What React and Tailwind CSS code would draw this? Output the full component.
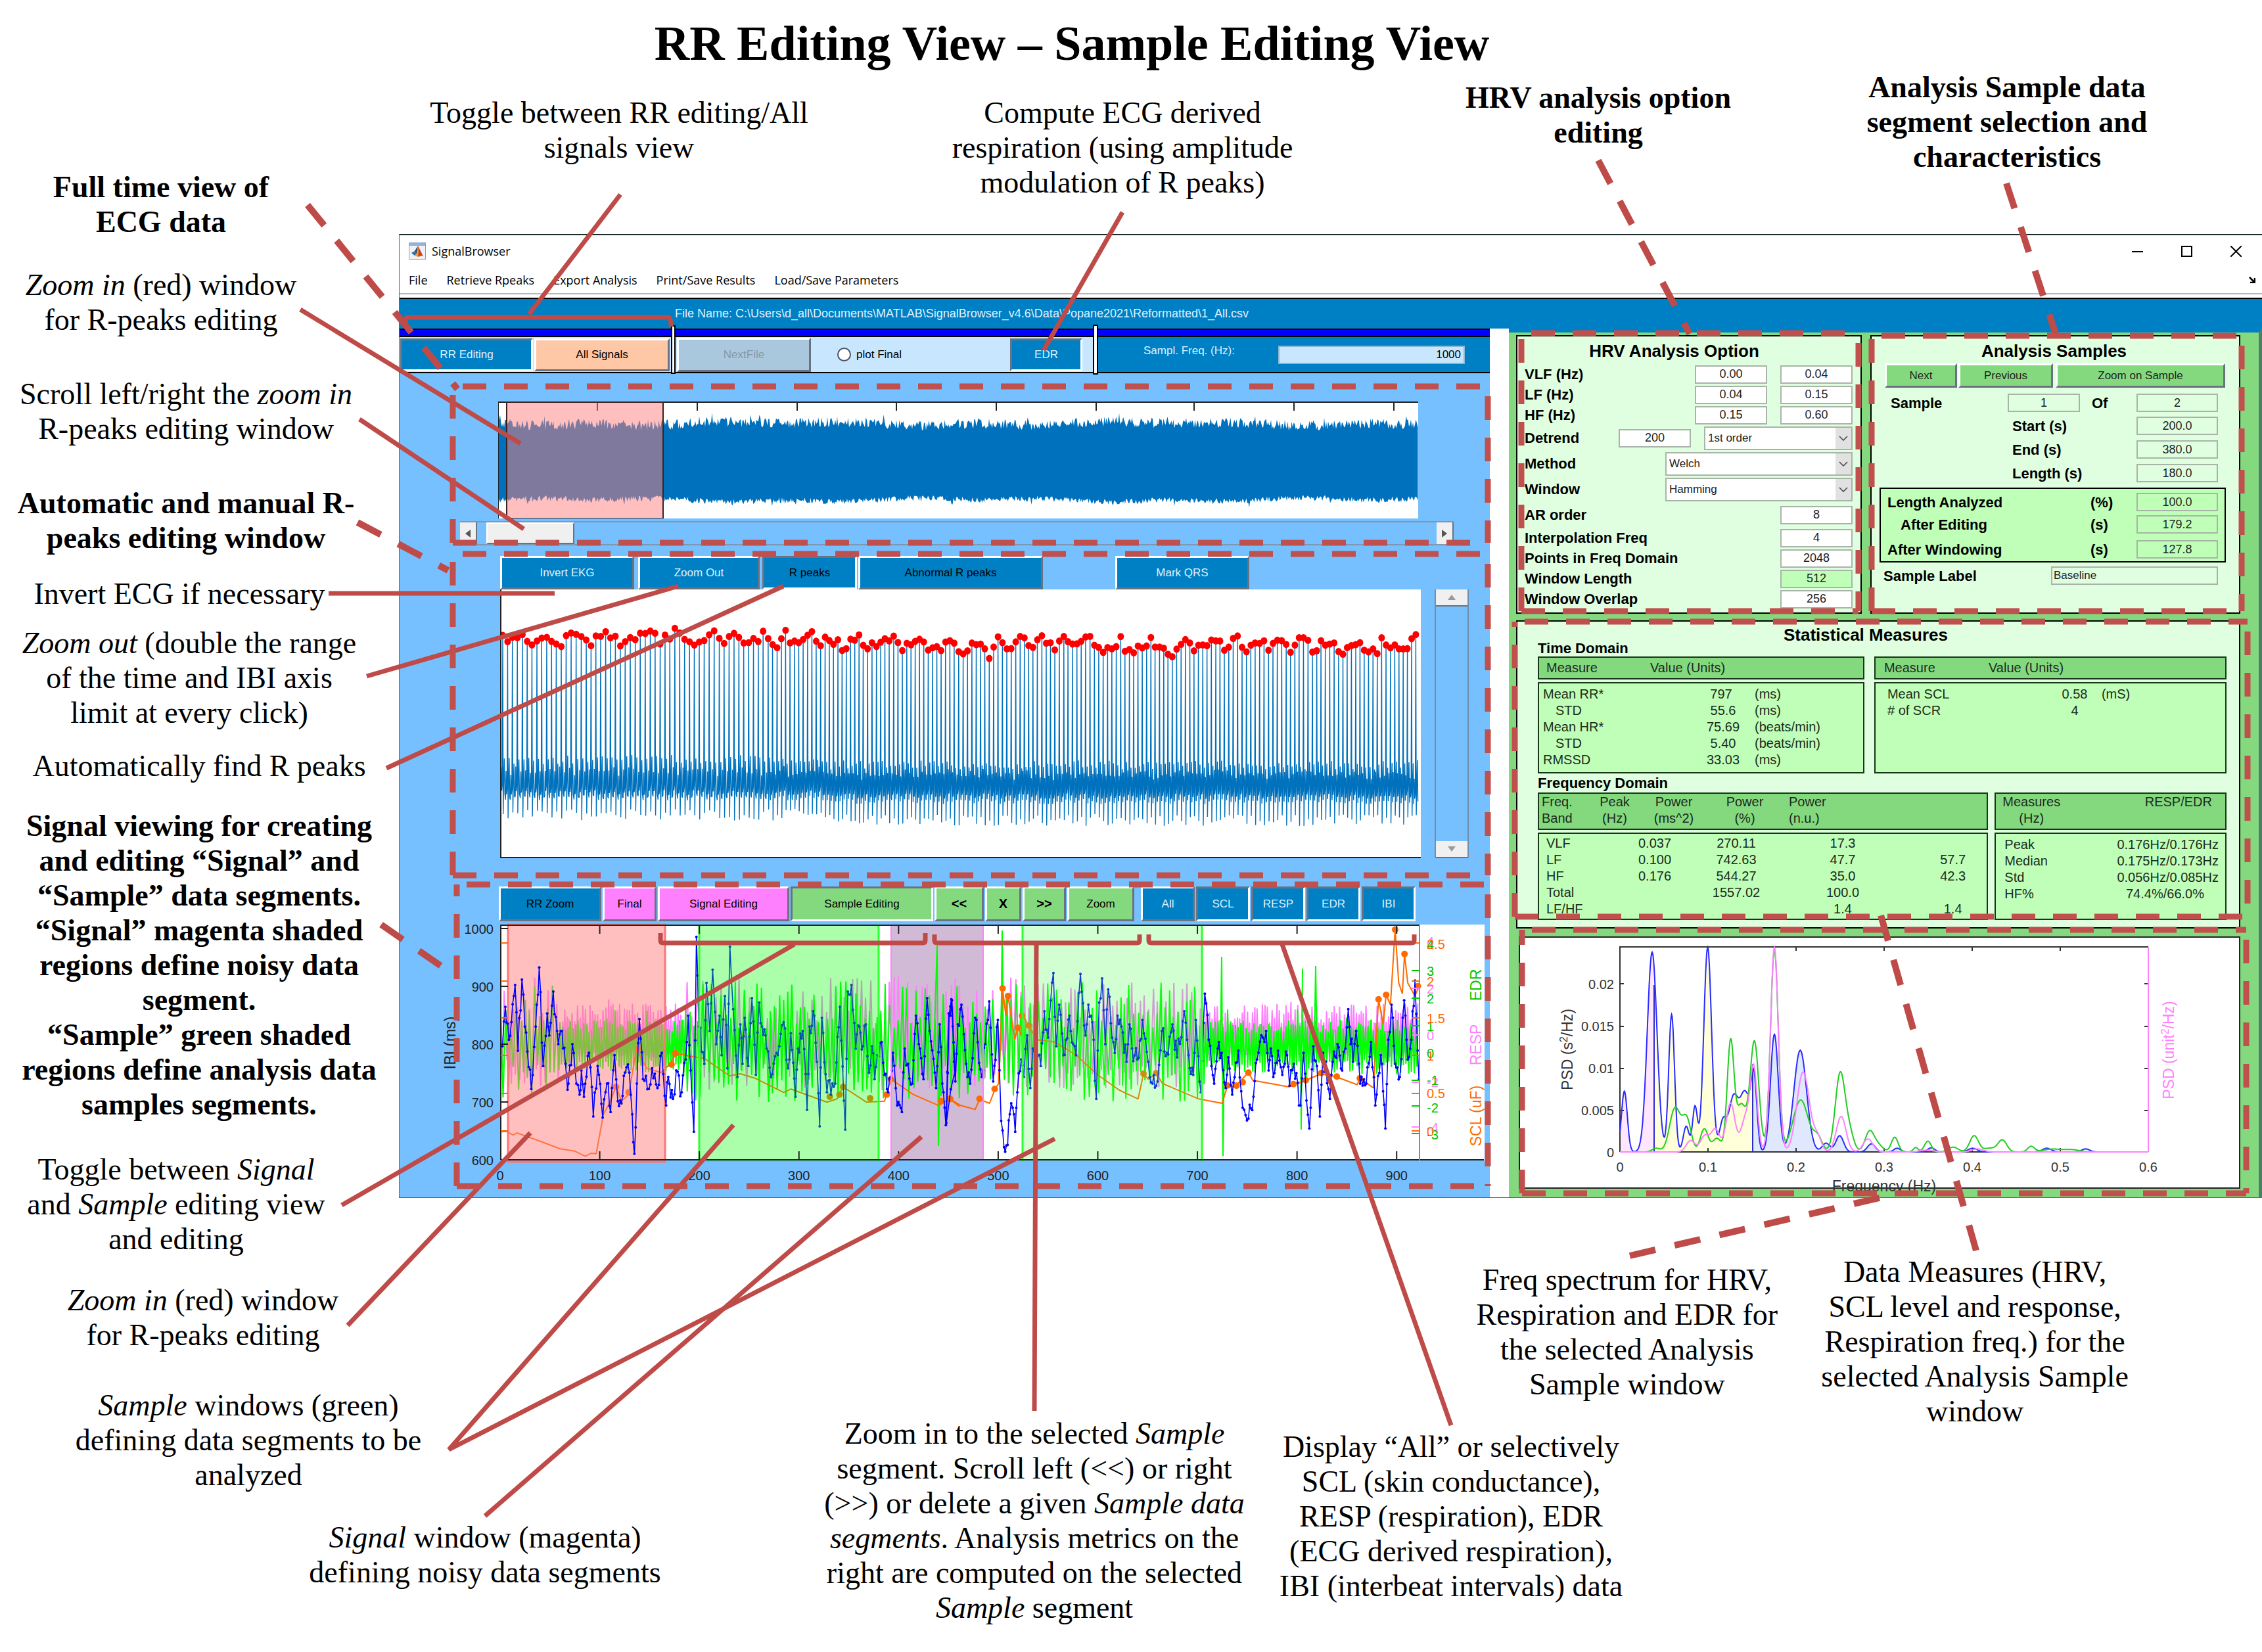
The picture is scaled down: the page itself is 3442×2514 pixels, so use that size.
import React from "react";

/* ---------- helpers ---------- */

function makeRandom(seed) {
  let s = seed;
  return () => {
    s = (s * 1664525 + 1013904223) % 4294967296;
    return s / 4294967296;
  };
}

const parse = (text) =>
  text
    .trim()
    .split(/\s+/)
    .map((p) => p.split(",").map(Number));

const toPoints = (list) => list.map(([x, y]) => `${x.toFixed(1)},${y.toFixed(1)}`).join(" ");

/* ---------- ECG overview ---------- */

function ecgOverview() {
  const rnd = makeRandom(7);
  const top = [];
  const bottom = [];
  for (let x = 0; x <= 1400; x += 1.5) {
    const drift = Math.sin(x / 90) * 2 + Math.sin(x / 31) * 1.5;
    top.push([x, 35 + drift + (rnd() - 0.6) * 16 - (rnd() > 0.97 ? 6 : 0)]);
    bottom.push([x, 149 - drift + (rnd() - 0.4) * 9 + (rnd() > 0.97 ? 6 : 0)]);
  }
  return toPoints([...top, ...bottom.reverse()]);
}

/* ---------- ECG beats ---------- */

function ecgBeats() {
  const rnd = makeRandom(21);
  const line = [];
  const peaks = [];
  let x = 4;
  let i = 0;
  while (x < 1398) {
    const drop = x > 500 ? 8 : 0;
    const slow = Math.sin(i * 1.05 + Math.sin(i / 9) * 2) * 7 + Math.sin(i / 7) * 3;
    const py = 74 + drop * 1.2 + slow + (rnd() - 0.5) * 16 + (x > 700 && rnd() > 0.96 ? 12 : 0);
    const base = 301 + drop * 0.7 + (rnd() - 0.5) * 8;
    line.push([x - 3.2, base + 16], [x - 2.4, base - 30 + rnd() * 10], [x - 1.6, base + 8], [x - 0.8, base], [x, py]);
    line.push([x + 0.7, 334 + drop + rnd() * 18], [x + 1.4, base - 4], [x + 2.4, 252 + drop + rnd() * 14]);
    line.push([x + 3.2, base + 12]);
    peaks.push([x, py]);
    x += (x < 400 ? 7.5 : 6.6) + (rnd() - 0.5) * 0.6;
    i += 1;
  }
  return { line: toPoints(line), peaks };
}

/* ---------- IBI / SCL / RESP / EDR traces ---------- */

const left = ([x, y]) => [600 + x / 1.823, 1330 + y / 3];
const right = ([x, y]) => [1440 + x / 1.823, 1330 + y / 3];

const IBI = [
  ...parse(`300,790 308,610 318,760 335,510 343,810 354,485 362,700 380,985 392,700 402,430 413,880 424,640 430,740 441,540 455,780 465,720 478,930 483,960 494,780 505,960 514,1010 519,900 526,1020 540,820 552,1110 564,880 578,1115 590,960 600,1090 611,830 620,1040 630,1050 640,910 652,910 660,1100 666,1280 673,960 680,665 690,940 706,985 715,890 730,980 742,820 754,1060 760,930 773,1030 782,900 797,1000 808,850 815,650 822,900 831,1180 838,290 845,700 860,870 866,500 875,720 883,440 893,780 902,650 908,830 917,560 924,890 931,335 940,620 952,930 960,690 966,870 972,660 982,880 992,570 1003,920 1012,590 1020,700 1033,800 1045,930 1060,820 1068,790 1080,680 1092,890 1100,730 1113,1020 1120,800 1133,720 1145,1080 1152,700 1165,650 1180,1155 1186,660 1200,1000 1215,960 1223,960 1236,610 1251,1170 1258,540 1268,510 1280,800 1290,700 1300,790 1308,690 1317,910 1325,790 1332,940 1340,830 1352,770 1360,920 1370,1000 1383,820 1395,1060 1408,1090 1416,800 1425,870 1437,960 1447,650 1455,780 1468,940 1478,570 1485,720 1503,980 1513,690 1520,960 1530,1150 1538,640 1547,580 1556,900`).map(left),
  ...parse(`0,1140 8,640 14,575 25,950 32,690 42,600 55,870 66,960 80,660 98,930 108,780 119,585 130,950 143,670 152,1130 160,1250 170,1240 176,1100 184,1070 191,1180 197,1000 208,850 215,930 224,740 233,980 240,800 262,880 272,630 282,750 297,455 305,790 313,600 325,830 342,650 352,780 360,830 372,460 386,740 394,600 405,680 416,1030 424,590 432,480 441,780 449,530 460,750 467,820 475,650 486,700 500,860 508,690 515,800 530,850 544,670 560,860 572,960 582,970 598,720 612,820 627,690 640,840 660,630 672,830 685,920 692,670 706,1000 717,550 728,760 743,960 756,770 775,980 782,840 793,1010 810,810 822,1070 838,1120 852,1020 862,850 878,750 887,720 894,900 900,800 907,930 920,810 932,920 945,830 952,970 964,870 982,1060 991,820 1007,1165 1018,790 1028,880 1036,1110 1045,820 1064,1030 1072,860 1085,780 1098,900 1107,800 1115,620 1128,860 1137,720 1148,960 1165,960 1178,770 1190,1060 1205,830 1218,1165 1226,760 1235,600 1245,870 1258,930 1270,580 1280,850 1290,760 1300,490 1311,940`).map(right),
];

const SCL = [
  ...parse(`297,1180 310,1178 330,1195 340,1185 400,1220 460,1258 500,1268 530,1292 545,1278 560,1280 580,1100 600,1040 615,970 630,1040 650,1010 672,800 700,890 740,910 765,870 782,822 820,835 860,845 930,925 960,915 1000,935 1080,1000 1100,985 1200,1045 1228,1030 1245,975 1310,1045 1360,1040 1378,940 1440,1010 1510,1060 1540,1030 1568,1065`).map(left),
  ...parse(`10,1030 40,1060 80,1078 92,1032 120,1050 135,985 145,960 156,525 165,650 171,560 190,760 198,700 208,740 212,650 230,700 250,760 300,770 360,830 420,920 480,990 532,1030 547,915 560,940 582,915 600,960 700,1030 765,1050 780,970 800,975 838,910 850,945 950,975 997,945 1040,915 1083,930 1140,965 1147,935 1185,980 1199,575 1212,690 1220,555 1232,600 1245,255 1255,500 1265,550 1271,368 1280,500 1300,560 1310,520`).map(right),
];

const SCL_PEAKS = [
  ...parse(`615,975 650,1000 676,800 769,873 780,822 1208,1020 1235,1010 1245,975 1320,1027 1366,1010 1377,940 1517,1040 1542,1030`).map(left),
  ...parse(`10,1030 92,1030 134,985 156,525 171,560 198,705 210,650 229,695 547,915 582,913 780,968 805,970 822,953 838,910 963,962 997,945 1040,912 1083,928 1147,936 1199,575 1220,555 1245,257 1271,368 1308,515`).map(right),
];

function jitterTrace(keys, seed) {
  const rnd = makeRandom(seed);
  const out = [];
  for (let i = 0; i < keys.length - 1; i += 1) {
    const [x0, y0] = keys[i];
    const [x1, y1] = keys[i + 1];
    out.push([x0, y0]);
    const steps = Math.max(2, Math.round((x1 - x0) / 2));
    for (let k = 1; k < steps; k += 1) {
      const f = k / steps;
      out.push([x0 + (x1 - x0) * f, y0 + (y1 - y0) * f + (rnd() - 0.5) * 30]);
    }
  }
  out.push(keys[keys.length - 1]);
  return out;
}

function oscillation(seed, upDense, downDense, upWide, downWide) {
  const rnd = makeRandom(seed);
  const out = [];
  let x = 762;
  let up = true;
  while (x < 2158) {
    const dense = (x > 850 && x < 1040) || x > 1830;
    const amp = dense ? 0.55 + rnd() * 0.55 + (rnd() > 0.96 ? 0.5 : 0) : 0.3 + rnd() * 0.85;
    const mid = 1592;
    if (up) out.push([x, mid - (dense ? upDense : upWide) * amp]);
    else out.push([x, mid + (dense ? downDense : downWide) * amp]);
    up = !up;
    x += dense ? 1.4 + rnd() * 1 : 2.2 + rnd() * 2.4;
  }
  return toPoints(out);
}

const EDR_SPIKES = parse(`1421,1600 1426,1440 1428,1745 1431,1600 1523,1600 1525,1417 1527,1600 1857,1600 1859,1457 1861,1760 1863,1600 1979,1590 1980,1720 1982,1475 2000,1590 2002,1471 2004,1600`);

const SIGNAL_TICKS = [0, 100, 200, 300, 400, 500, 600, 700, 800, 900];
const tx = (t) => 761 + t * 1.5158;
const vy = (v) => 1766 - (v - 600) * 0.88;

function SignalsPlot() {
  const ibi = jitterTrace(IBI, 5);
  return (
    <svg viewBox="608 1403 1659 420" className="block w-full" role="img" aria-label="IBI, EDR, RESP and SCL signals over time" fontFamily="Liberation Sans, Arial, sans-serif" fontSize="20">
      <rect x="762" y="1408" width="1497" height="359" fill="#fff" />
      <rect x="1356" y="1409" width="140" height="357" fill="#d1bad5" />
      <g fill="none" strokeLinejoin="bevel">
        <polyline points={oscillation(11, 58, 18, 92, 60)} stroke="#ff80ff" strokeWidth="2" />
        <polyline points={oscillation(3, 36, 40, 86, 76)} stroke="#00ff00" strokeWidth="2" />
        {[0, 4, 7, 11, 14].map((start, i, all) => (
          <polyline key={start} points={toPoints(EDR_SPIKES.slice(start, all[i + 1]))} stroke="#00ff00" strokeWidth="2" />
        ))}
        <polyline points={toPoints(SCL)} stroke="#ff6a00" strokeWidth="2" />
      </g>
      {SCL_PEAKS.map(([x, y]) => (
        <circle key={x} cx={x} cy={y} r="5" fill="#ff6a00" />
      ))}
      <rect x="773" y="1408" width="239" height="361" fill="#ff8080" fillOpacity=".5" stroke="#ff7474" strokeWidth="3" />
      <polyline points={toPoints(ibi)} fill="none" stroke="#0000ff" strokeWidth="1.6" />
      {ibi.map(([x, y], i) => (
        <circle key={i} cx={x} cy={y} r="2" fill="#0000ff" />
      ))}
      <rect x="1063" y="1408" width="274" height="361" fill="#00ff00" fillOpacity=".33" />
      <rect x="1556" y="1408" width="274" height="361" fill="#40ff40" fillOpacity=".24" />
      <g stroke="#2eff2e" strokeWidth="3">
        <path d="M1064 1408V1769M1337 1408V1769M1556 1408V1769M1829 1408V1769" />
      </g>
      <path d="M1356 1409V1766M1496 1409V1766" stroke="#ff80ff" strokeWidth="2" />
      <path d="M762 1766V1409H2160M762 1766H2258" fill="none" stroke="#222" strokeWidth="2" />
      <g stroke="#222" strokeWidth="2">
        {SIGNAL_TICKS.slice(1).map((t) => (
          <path key={t} d={`M${tx(t)} 1766v-13M${tx(t)} 1409v13`} />
        ))}
        {[600, 700, 800, 900, 1000].map((v) => (
          <path key={v} d={`M762 ${vy(v)}h11`} />
        ))}
      </g>
      <path d="M762 1436h11M762 1494h11M762 1550h11M762 1607h11M762 1665h11M762 1722h11" stroke="#ff6a00" strokeWidth="2" />
      <path d="M2160 1408V1767M2148 1436h12M2148 1494h12M2148 1550h12M2148 1607h12M2148 1665h12M2148 1722h12" stroke="#ff6a00" strokeWidth="2" />
      <path d="M2148 1478h12M2148 1520h12M2148 1562h12M2148 1645h12M2148 1684h12M2148 1726h12" stroke="#00c800" strokeWidth="2" />
      <path d="M2148 1505h12M2148 1576h12M2148 1648h12M2148 1716h12" stroke="#ff80ff" strokeWidth="2" />
      <g fill="#222" textAnchor="end">
        {[600, 700, 800, 900, 1000].map((v) => (
          <text key={v} x="751" y={vy(v) + 8}>{v}</text>
        ))}
      </g>
      <g fill="#222" textAnchor="middle">
        {SIGNAL_TICKS.map((t) => (
          <text key={t} x={tx(t)} y="1797">{t}</text>
        ))}
      </g>
      <g fill="#ff80ff">
        <text x="2171" y="1441">4</text>
        <text x="2171" y="1513">2</text>
        <text x="2171" y="1584">0</text>
        <text x="2171" y="1655">-2</text>
        <text x="2171" y="1724">-4</text>
      </g>
      <g fill="#00c000">
        <text x="2171" y="1445">4</text>
        <text x="2171" y="1486">3</text>
        <text x="2171" y="1528">2</text>
        <text x="2171" y="1570">1</text>
        <text x="2171" y="1611">0</text>
        <text x="2171" y="1652">-1</text>
        <text x="2171" y="1694">-2</text>
        <text x="2171" y="1735">-3</text>
      </g>
      <g fill="#ff6a00">
        <text x="2171" y="1445">2.5</text>
        <text x="2171" y="1502">2</text>
        <text x="2171" y="1558">1.5</text>
        <text x="2171" y="1615">1</text>
        <text x="2171" y="1672">0.5</text>
        <text x="2171" y="1730">0</text>
      </g>
      <g fontSize="23" textAnchor="middle">
        <text transform="translate(693 1588) rotate(-90)" fill="#222">IBI (ms)</text>
        <text transform="translate(2254 1500) rotate(-90)" fill="#00c800">EDR</text>
        <text transform="translate(2254 1591) rotate(-90)" fill="#ff80ff">RESP</text>
        <text transform="translate(2254 1699) rotate(-90)" fill="#ff6a00">SCL (uF)</text>
      </g>
    </svg>
  );
}

/* ---------- power spectrum ---------- */

const PSD_BLUE = parse(`260,785,6 317,150,10 357,435,6 387,945,6 405,857,5 431,128,8 462,930,7 484,815,10 508,800,10 526,740,6 568,525,8 621,598,13 674,1022,8 702,988,8 767,1025,8 820,1045,7 890,1043,7 975,1045,9 1127,1045,9 1207,1048,8`);
const PSD_GREEN = parse(`325,1045,8 364,862,11 388,915,9 424,957,8 450,1000,9 478,565,7 500,850,10 527,560,9 568,140,8 622,825,16 657,1000,9 703,705,10 722,980,9 763,972,9 780,1030,10 815,995,7 858,1042,5 883,1013,7 935,1040,10 978,988,9 1010,1045,12 1036,1008,9 1095,1037,7 1140,1049,20 1180,1053,14`);
const PSD_PINK = parse(`396,1010,9 425,990,9 447,960,9 478,840,9 510,900,10 526,710,7 568,128,8 627,697,13 657,1000,8 705,900,10 760,1003,10 880,1054,14 985,1048,12`);

function spectrum(peaks, from, to) {
  const out = [];
  for (let x = from; x <= to; x += 1) {
    let h = 0;
    for (const [c, y, s] of peaks) h += (1062 - y) * Math.exp(-((x - c) ** 2) / (2 * s * s));
    out.push([2280 + x / 1.349, 1400 + (1062 - Math.min(h, 935)) / 3]);
  }
  return out;
}

function area(from, to) {
  const p = spectrum(PSD_BLUE, from, to);
  return toPoints([[p[0][0], 1754], ...p, [p[p.length - 1][0], 1754]]);
}

function SpectrumPlot() {
  const xs = [0, 1, 2, 3, 4, 5, 6];
  return (
    <svg viewBox="2314 1428 1094 380" className="block w-full overflow-visible" role="img" aria-label="Power spectral density" fontFamily="Liberation Sans, Arial, sans-serif" fontSize="20">
      <polygon points={area(251, 320)} fill="#ffe6ff" />
      <polygon points={area(320, 523)} fill="#ffffd9" />
      <polygon points={area(523, 900)} fill="#dfe8fd" />
      <path d="M2466 1754V1442H3270M2466 1754H3270" fill="none" stroke="#333" strokeWidth="2" />
      <g stroke="#333" strokeWidth="2">
        {xs.slice(1, 6).map((i) => (
          <path key={i} d={`M${2466 + i * 134} 1754v-6M${2466 + i * 134} 1442v6`} />
        ))}
        <path d="M2466 1498h6M2466 1563h6M2466 1627h6M2466 1691h6M3270 1498h-6M3270 1563h-6M3270 1627h-6M3270 1691h-6" />
      </g>
      <g fill="none" strokeWidth="2">
        <polyline points={toPoints(spectrum(PSD_BLUE, 251, 1335))} stroke="#2a2aff" />
        <path d="M2518 1754V1500M2668 1754V1620" stroke="#2a2ad0" />
        <polyline points={toPoints(spectrum(PSD_GREEN, 251, 1335))} stroke="#22cc22" />
        <polyline points={toPoints(spectrum(PSD_PINK, 251, 1335))} stroke="#ff80ff" />
        <path d="M3270 1442V1754" stroke="#ff80ff" />
      </g>
      <g fill="#333" textAnchor="end">
        <text x="2457" y="1506">0.02</text>
        <text x="2457" y="1570">0.015</text>
        <text x="2457" y="1634">0.01</text>
        <text x="2457" y="1698">0.005</text>
        <text x="2457" y="1762">0</text>
      </g>
      <g fill="#333" textAnchor="middle">
        {xs.map((i) => (
          <text key={i} x={2466 + i * 134} y="1784">{i === 0 ? "0" : `0.${i}`}</text>
        ))}
        <text x="2868" y="1814" fontSize="23">Frequency (Hz)</text>
        <text transform="translate(2394 1598) rotate(-90)" fontSize="23">
          PSD (s<tspan dy="-8" fontSize="16">2</tspan><tspan dy="8">/Hz)</tspan>
        </text>
        <text transform="translate(3309 1599) rotate(-90)" fontSize="23" fill="#ff80ff">
          PSD (unit<tspan dy="-8" fontSize="16">2</tspan><tspan dy="8">/Hz)</tspan>
        </text>
      </g>
    </svg>
  );
}

/* ---------- window controls ---------- */

const RAISED = "border-t-white border-l-white border-b-gray-500 border-r-gray-500";
const SUNK = "border-t-gray-500 border-l-gray-500 border-b-white border-r-white";

function Btn({ children, sunk, className }) {
  return (
    <button type="button" className={`shrink-0 border-[3px] text-center text-[17px] leading-5 ${sunk ? SUNK : RAISED} ${className}`}>
      {children}
    </button>
  );
}

function MatlabIcon() {
  return (
    <svg viewBox="0 0 26 26" className="h-[26px] w-[26px]" aria-hidden="true">
      <rect x=".5" y=".5" width="25" height="25" fill="#eef1f5" stroke="#8aa0b8" />
      <rect x="1" y="1" width="24" height="4" fill="#8fb4d8" />
      <path d="M4 16l5-3 3 4-3 3z" fill="#2a6fb0" />
      <path d="M9 13l5-8-2 12z" fill="#174a86" />
      <path d="M14 5l4 8 4 8-3-1-4 2-3-5z" fill="#c8401e" />
      <path d="M14 5l1 9-1 8-5-2 3-3z" fill="#f29a2e" />
    </svg>
  );
}

function TitleBar() {
  return (
    <header className="h-[97px] border-t-2 border-[#1c2b2b] bg-white font-['Open_Sans','Noto_Sans',sans-serif] text-[18px] text-black">
      <div className="flex h-[48px] items-center gap-[9px] pl-3.5">
        <MatlabIcon />
        <span className="flex-1">SignalBrowser</span>
        <div className="flex items-center gap-[58px] pr-[31px]">
          <button type="button" aria-label="Minimize" className="h-[17px] w-[17px]">
            <svg viewBox="0 0 17 17"><path d="M0 9h17" stroke="#000" strokeWidth="2" /></svg>
          </button>
          <button type="button" aria-label="Maximize" className="h-[17px] w-[17px]">
            <svg viewBox="0 0 17 17"><rect x="1" y="1" width="15" height="15" fill="none" stroke="#000" strokeWidth="2" /></svg>
          </button>
          <button type="button" aria-label="Close" className="h-[17px] w-[17px]">
            <svg viewBox="0 0 17 17"><path d="M0 0l17 17M17 0L0 17" stroke="#000" strokeWidth="2" /></svg>
          </button>
        </div>
      </div>
      <nav className="flex h-[42px] items-center gap-[29px] border-b-2 border-[#b8b8b8] pl-3.5 pr-2.5">
        <button type="button">File</button>
        <button type="button">Retrieve Rpeaks</button>
        <button type="button">Export Analysis</button>
        <button type="button">Print/Save Results</button>
        <button type="button">Load/Save Parameters</button>
        <svg viewBox="0 0 10 10" className="ml-auto h-2.5 w-2.5" aria-hidden="true"><path d="M1 1l7 7M9 2v7H2" fill="none" stroke="#000" strokeWidth="2.5" /></svg>
      </nav>
    </header>
  );
}

function Toolbar() {
  return (
    <div className="flex h-[68px] flex-col">
      <div className="h-[13px] border-y-2 border-black bg-[#0000ff]" />
      <div className="flex h-[55px] items-center border-b-2 border-black bg-[#c8e7ff]">
        <Btn sunk className="ml-px h-[50px] w-[202px] bg-[#0080c4] text-[#dff1ff]">RR Editing</Btn>
        <Btn className="ml-0.5 h-[50px] w-[206px] bg-[#fec7a6] text-black">All Signals</Btn>
        <div className="-mt-4 ml-0.5 h-[74px] w-[7px] shrink-0 border-2 border-black bg-white" />
        <Btn className="ml-0.5 h-[52px] w-[204px] bg-[#a9c8dd] text-[#8598a6]">NextFile</Btn>
        <label className="ml-10 flex items-center gap-2 text-[17px] text-black">
          <input type="radio" name="plot" className="h-[21px] w-[21px] appearance-none rounded-full border-2 border-gray-600 bg-white" />
          plot Final
        </label>
        <Btn sunk className="ml-auto h-[50px] w-[110px] bg-[#0080c4] text-[#dff1ff]">EDR</Btn>
        <div className="-mt-4 ml-4 h-[76px] w-[8px] shrink-0 border-2 border-black bg-white" />
        <label className="flex h-full w-[596px] shrink-0 items-center bg-[#0080c4] pl-[69px] text-[17px] text-[#dff1ff]">
          <span className="w-[205px] pb-3">Sampl. Freq. (Hz):</span>
          <input defaultValue="1000" className="h-7 w-[284px] border-2 border-[#8fb6d0] bg-[#c8e7ff] px-1 text-right text-[17px] text-black" />
        </label>
      </div>
    </div>
  );
}

function OverviewPanel() {
  return (
    <section className="pt-[43px]">
      <svg viewBox="0 0 1400 178" preserveAspectRatio="none" className="ml-[150px] block h-[178px] w-[calc(100%-259px)] bg-white" role="img" aria-label="Full ECG recording">
        <polygon points={ecgOverview()} fill="#0072bd" />
        <path d="M0 178V1H1400" fill="none" stroke="#222" strokeWidth="2" />
        {[151, 303, 455, 606, 758, 910, 1059, 1211, 1363].map((x) => (
          <path key={x} d={`M${x} 1v13`} stroke="#222" strokeWidth="2" />
        ))}
        <rect x="13" y="1" width="238" height="177" fill="#ff8080" fillOpacity=".5" stroke="#402020" strokeWidth="2" />
      </svg>
      <div className="ml-[92px] mr-[55px] mt-1 flex h-[37px] border-y-2 border-[#7c98b2]">
        <button type="button" aria-label="Scroll left" className="flex w-[26px] items-center justify-center border-r-2 border-gray-500 bg-[#f0f0f0]">
          <svg viewBox="0 0 8 12" className="h-3 w-2"><path d="M8 0v12L0 6z" fill="#555" /></svg>
        </button>
        <div className="ml-3.5 w-[134px] border-2 border-b-gray-500 border-l-white border-r-gray-500 border-t-white bg-[#f0f0f0]" />
        <button type="button" aria-label="Scroll right" className="ml-auto flex w-[26px] items-center justify-center border-r-2 border-gray-500 bg-[#f0f0f0]">
          <svg viewBox="0 0 8 12" className="h-3 w-2"><path d="M0 0v12l8-6z" fill="#555" /></svg>
        </button>
      </div>
    </section>
  );
}

function EditingPanel() {
  const { line, peaks } = ecgBeats();
  return (
    <section className="pl-[153px] pr-8 pt-4">
      <div className="flex h-[51px]">
        <Btn className="w-[204px] bg-[#0080c4] text-[#dff1ff]">Invert EKG</Btn>
        <Btn className="ml-1.5 w-[185px] bg-[#0080c4] text-[#dff1ff]">Zoom Out</Btn>
        <Btn sunk className="ml-1 w-[144px] bg-[#0080c4] text-black">R peaks</Btn>
        <Btn className="ml-0.5 w-[281px] bg-[#0080c4] text-black">Abnormal R peaks</Btn>
        <Btn className="ml-[110px] w-[204px] bg-[#0080c4] text-[#dff1ff]">Mark QRS</Btn>
      </div>
      <div className="flex gap-[21px]">
        <svg viewBox="0 0 1400 409" preserveAspectRatio="none" className="block h-[409px] min-w-0 flex-1 bg-white" role="img" aria-label="ECG with detected R peaks">
          <polyline points={line} fill="none" stroke="#0072bd" strokeWidth="1.4" strokeLinejoin="bevel" />
          {peaks.map(([x, y]) => (
            <ellipse key={x} cx={x} cy={y} rx="5" ry="5.5" fill="#ff0000" />
          ))}
          <path d="M1 0V408H1400" fill="none" stroke="#222" strokeWidth="2" />
        </svg>
        <div className="flex w-[52px] flex-col justify-between border-x-2 border-[#6f8eaa]">
          <button type="button" aria-label="Scale up" className="flex h-[26px] items-center justify-center border-b-2 border-gray-500 bg-[#f0f0f0]">
            <svg viewBox="0 0 12 8" className="h-2 w-3"><path d="M0 8h12L6 0z" fill="#999" /></svg>
          </button>
          <button type="button" aria-label="Scale down" className="flex h-[26px] items-center justify-center border-b-2 border-gray-500 bg-[#f0f0f0]">
            <svg viewBox="0 0 12 8" className="h-2 w-3"><path d="M0 0h12L6 8z" fill="#999" /></svg>
          </button>
        </div>
      </div>
    </section>
  );
}

function SignalsPanel() {
  return (
    <section className="pt-[43px]">
      <div className="flex h-[53px] gap-0.5 pl-[151px]">
        <Btn className="w-[156px] bg-[#0080c4] text-black">RR Zoom</Btn>
        <Btn className="w-[82px] bg-[#ff80ff] text-black">Final</Btn>
        <Btn className="w-[200px] bg-[#ff80ff] text-black">Signal Editing</Btn>
        <Btn sunk className="w-[217px] bg-[#84d97f] text-black">Sample Editing</Btn>
        <Btn className="w-[75px] bg-[#84d97f] text-black"><b className="text-[20px]">&lt;&lt;</b></Btn>
        <Btn className="w-[55px] bg-[#84d97f] text-black"><b className="text-[20px]">X</b></Btn>
        <Btn className="w-[66px] bg-[#84d97f] text-black"><b className="text-[20px]">&gt;&gt;</b></Btn>
        <Btn className="w-[102px] bg-[#84d97f] text-black">Zoom</Btn>
        <Btn className="ml-2 w-[82px] bg-[#0080c4] text-[#dff1ff]">All</Btn>
        <Btn sunk className="w-[82px] bg-[#0080c4] text-[#dff1ff]">SCL</Btn>
        <Btn sunk className="w-[82px] bg-[#0080c4] text-[#dff1ff]">RESP</Btn>
        <Btn sunk className="w-[82px] bg-[#0080c4] text-[#dff1ff]">EDR</Btn>
        <Btn sunk className="w-[82px] bg-[#0080c4] text-[#dff1ff]">IBI</Btn>
      </div>
      <SignalsPlot />
    </section>
  );
}

/* ---------- analysis side ---------- */

function Field({ id, value, className = "w-[110px] bg-white" }) {
  return <input id={id} aria-label={id} defaultValue={value} className={`h-7 shrink-0 border-2 border-[#a9b4a9] text-center text-[18px] text-[#222] ${className}`} />;
}

function Picker({ id, value, className }) {
  return (
    <div className={`relative h-9 shrink-0 ${className}`}>
      <select id={id} aria-label={id} className="h-full w-full appearance-none border-2 border-[#a9b4a9] bg-white pl-1 text-[17px] text-[#222]">
        <option>{value}</option>
      </select>
      <div className="pointer-events-none absolute inset-y-0.5 right-0.5 flex w-6 items-center justify-center bg-[#e1e1e1]">
        <svg viewBox="0 0 14 8" className="h-2 w-3.5"><path d="M1 1l6 6 6-6" fill="none" stroke="#444" strokeWidth="1.5" /></svg>
      </div>
    </div>
  );
}

function OptionRow({ id, label, tall, children }) {
  return (
    <div className={`flex items-center gap-5 ${tall ? "h-[39px]" : "h-[31px]"}`}>
      <label htmlFor={id} className="flex-1 whitespace-nowrap text-[22px] font-bold">{label}</label>
      {children}
    </div>
  );
}

function OptionPanel() {
  return (
    <section className="h-[424px] border-2 border-black bg-[#e0ffe0] pl-[11px] pr-3 pt-1">
      <h2 className="h-[38px] pr-11 text-center text-[26px] font-bold leading-9">HRV Analysis Option</h2>
      <OptionRow id="vlf" label="VLF (Hz)"><Field id="vlf" value="0.00" /><Field id="vlf-max" value="0.04" /></OptionRow>
      <OptionRow id="lf" label="LF (Hz)"><Field id="lf" value="0.04" /><Field id="lf-max" value="0.15" /></OptionRow>
      <OptionRow id="hf" label="HF (Hz)"><Field id="hf" value="0.15" /><Field id="hf-max" value="0.60" /></OptionRow>
      <OptionRow id="detrend" label="Detrend" tall><Field id="detrend" value="200" /><Picker id="order" value="1st order" className="w-[226px]" /></OptionRow>
      <OptionRow id="method" label="Method" tall><Picker id="method" value="Welch" className="w-[285px]" /></OptionRow>
      <OptionRow id="window" label="Window" tall><Picker id="window" value="Hamming" className="w-[285px]" /></OptionRow>
      <OptionRow id="ar" label="AR order" tall><Field id="ar" value="8" /></OptionRow>
      <OptionRow id="interp" label="Interpolation Freq"><Field id="interp" value="4" /></OptionRow>
      <OptionRow id="points" label="Points in Freq Domain"><Field id="points" value="2048" /></OptionRow>
      <OptionRow id="wlen" label="Window Length"><Field id="wlen" value="512" className="w-[110px] bg-[#c0ffb8]" /></OptionRow>
      <OptionRow id="wover" label="Window Overlap"><Field id="wover" value="256" /></OptionRow>
    </section>
  );
}

function SamplesPanel() {
  const mint = "w-[124px] bg-[#e0ffe0]";
  const green = "w-[124px] bg-[#c0ffb8]";
  return (
    <section className="h-[424px] border-2 border-black bg-[#e0ffe0] pt-1 text-[22px] font-bold">
      <h2 className="h-[37px] pr-1 text-center text-[26px] leading-9">Analysis Samples</h2>
      <div className="flex h-[37px] gap-0.5 pl-5 font-normal">
        <Btn className="w-[110px] bg-[#84d97f] text-[#222]">Next</Btn>
        <Btn className="w-[144px] bg-[#84d97f] text-[#222]">Previous</Btn>
        <Btn className="ml-0.5 w-[258px] bg-[#84d97f] text-[#222]">Zoom on Sample</Btn>
      </div>
      <div className="mr-8 mt-1.5 flex h-[34px] items-center pl-[29px]">
        <label htmlFor="sample" className="flex-1">Sample</label>
        <Field id="sample" value="1" className="w-[110px] bg-[#e0ffe0] font-normal" />
        <label htmlFor="of" className="w-[86px] pl-[18px]">Of</label>
        <Field id="of" value="2" className={`${mint} font-normal`} />
      </div>
      {[["start", "Start (s)", "200.0"], ["end", "End (s)", "380.0"], ["length", "Length (s)", "180.0"]].map(([id, label, value]) => (
        <div key={id} className="mr-8 flex h-9 items-center justify-end">
          <label htmlFor={id} className="w-[189px]">{label}</label>
          <Field id={id} value={value} className={`${mint} font-normal`} />
        </div>
      ))}
      <div className="ml-3 mr-5 mt-1 h-[114px] border-2 border-black bg-[#c0ffb8] px-2.5 pt-1">
        <div className="flex h-8 items-center">
          <label htmlFor="pct" className="flex-1">Length Analyzed</label>
          <span className="w-[70px]">(%)</span>
          <Field id="pct" value="100.0" className={`${green} font-normal`} />
        </div>
        <div className="flex h-9 items-center">
          <label htmlFor="edited" className="flex-1 pl-5">After Editing</label>
          <span className="w-[70px]">(s)</span>
          <Field id="edited" value="179.2" className={`${green} font-normal`} />
        </div>
        <div className="flex h-10 items-center">
          <label htmlFor="windowed" className="flex-1">After Windowing</label>
          <span className="w-[70px]">(s)</span>
          <Field id="windowed" value="127.8" className={`${green} font-normal`} />
        </div>
      </div>
      <div className="mr-8 mt-1 flex h-8 items-center pl-[18px]">
        <label htmlFor="label" className="flex-1">Sample Label</label>
        <input id="label" defaultValue="Baseline" className="h-7 w-[254px] border-2 border-[#a9b4a9] bg-[#e0ffe0] px-0.5 text-[17px] font-normal text-[#222]" />
      </div>
    </section>
  );
}

const HEAD = "border-2 border-[#173517] bg-[#84d97f]";
const BODY = "mt-1 border-2 border-[#173517] bg-[#c0ffb8]";

function StatsPanel() {
  return (
    <section className="mt-2.5 h-[469px] border-2 border-black bg-[#e0ffe0] pl-[31px] pr-[19px] pt-1 text-[20px] leading-[25px] text-[#1c2b1c]">
      <h2 className="h-[25px] pr-[50px] text-center text-[26px] font-bold leading-8 text-black">Statistical Measures</h2>
      <h3 className="h-6 text-[22px] font-bold leading-6 text-black">Time Domain</h3>
      <div className="grid grid-cols-[496fr_535fr] gap-[15px]">
        <div>
          <div className={`flex h-[35px] items-center pl-[11px] ${HEAD}`}><span className="w-[158px]">Measure</span><span>Value (Units)</span></div>
          <div className={`h-[139px] pt-1 ${BODY}`}>
            <table className="w-full table-fixed">
              <colgroup><col className="w-[232px]" /><col className="w-[96px]" /><col /></colgroup>
              <tbody>
                <tr><td className="pl-1.5">Mean RR*</td><td className="pr-1.5 text-center">797</td><td>(ms)</td></tr>
                <tr><td className="pl-[25px]">STD</td><td className="text-center">55.6</td><td>(ms)</td></tr>
                <tr><td className="pl-1.5">Mean HR*</td><td className="text-center">75.69</td><td>(beats/min)</td></tr>
                <tr><td className="pl-[25px]">STD</td><td className="text-center">5.40</td><td>(beats/min)</td></tr>
                <tr><td className="pl-1.5">RMSSD</td><td className="text-center">33.03</td><td>(ms)</td></tr>
              </tbody>
            </table>
          </div>
        </div>
        <div>
          <div className={`flex h-[35px] items-center pl-[13px] ${HEAD}`}><span className="w-[159px]">Measure</span><span>Value (Units)</span></div>
          <div className={`h-[139px] pt-1 ${BODY}`}>
            <table className="w-full table-fixed">
              <colgroup><col className="w-[262px]" /><col className="w-[82px]" /><col /></colgroup>
              <tbody>
                <tr><td className="pl-[18px]">Mean SCL</td><td className="text-center">0.58</td><td>(mS)</td></tr>
                <tr><td className="pl-[18px]"># of SCR</td><td className="text-center">4</td><td /></tr>
              </tbody>
            </table>
          </div>
        </div>
      </div>
      <h3 className="h-[29px] text-[22px] font-bold leading-[30px] text-black">Frequency Domain</h3>
      <div className="grid grid-cols-[minmax(0,684fr)_minmax(0,352fr)] gap-2.5">
        <div>
          <div className={`flex h-[57px] ${HEAD}`}>
            <span className="w-[82px] pl-1">Freq.<br />Band</span>
            <span className="w-[66px] text-center">Peak<br />(Hz)</span>
            <span className="w-[114px] text-center">Power<br />(ms^2)</span>
            <span className="w-[102px] text-center">Power<br />(%)</span>
            <span className="pl-4">Power<br />(n.u.)</span>
          </div>
          <div className={`h-[133px] pt-0.5 ${BODY}`}>
            <table className="w-full table-fixed text-center">
              <colgroup><col className="w-[122px]" /><col className="w-[108px]" /><col className="w-[140px]" /><col className="w-[184px]" /><col /></colgroup>
              <tbody>
                <tr><td className="pl-[11px] text-left">VLF</td><td>0.037</td><td>270.11</td><td>17.3</td><td /></tr>
                <tr><td className="pl-[11px] text-left">LF</td><td>0.100</td><td>742.63</td><td>47.7</td><td className="pl-6">57.7</td></tr>
                <tr><td className="pl-[11px] text-left">HF</td><td>0.176</td><td>544.27</td><td>35.0</td><td className="pl-6">42.3</td></tr>
                <tr><td className="pl-[11px] text-left">Total</td><td /><td>1557.02</td><td>100.0</td><td /></tr>
                <tr><td className="pl-[11px] text-left">LF/HF</td><td /><td /><td>1.4</td><td className="pl-6">1.4</td></tr>
              </tbody>
            </table>
          </div>
        </div>
        <div>
          <div className={`flex h-[57px] justify-between pl-2.5 pr-5 ${HEAD}`}>
            <span className="text-center">Measures<br />(Hz)</span>
            <span>RESP/EDR</span>
          </div>
          <div className={`h-[133px] pt-1 ${BODY}`}>
            <table className="w-full">
              <tbody>
                <tr><td className="pl-[13px]">Peak</td><td className="pr-2.5 text-right">0.176Hz/0.176Hz</td></tr>
                <tr><td className="pl-[13px]">Median</td><td className="pr-2.5 text-right">0.175Hz/0.173Hz</td></tr>
                <tr><td className="pl-[13px]">Std</td><td className="pr-2.5 text-right">0.056Hz/0.085Hz</td></tr>
                <tr><td className="pl-[13px]">HF%</td><td className="pr-8 text-right">74.4%/66.0%</td></tr>
              </tbody>
            </table>
          </div>
        </div>
      </div>
    </section>
  );
}

function SignalBrowser() {
  return (
    <main className="border-b border-l border-[#556b7a] font-['Liberation_Sans',Arial,sans-serif]">
      <TitleBar />
      <div className="h-[47px] border-t-2 border-black bg-[#0080c4] pl-[419px] text-[18px] leading-[44px] text-[#dff1ff]">
        <p>File Name: C:\Users\d_all\Documents\MATLAB\SignalBrowser_v4.6\Data\Popane2021\Reformatted\1_All.csv</p>
      </div>
      <div className="grid grid-cols-[1659fr_29fr_1146fr]">
        <div className="min-w-0 bg-[#76c0ff]">
          <Toolbar />
          <OverviewPanel />
          <EditingPanel />
          <SignalsPanel />
        </div>
        <div className="bg-white" />
        <div className="min-w-0 border-r-[5px] border-t-[6px] border-r-[#4e7f6c] border-t-[#0080c4] bg-[#84d97f] pl-[11px] pr-7 pt-1">
          <div className="grid grid-cols-[526fr_563fr] gap-[13px]">
            <OptionPanel />
            <SamplesPanel />
          </div>
          <StatsPanel />
          <section className="ml-1 mt-3 h-[384px] border-2 border-[#222] bg-white">
            <SpectrumPlot />
          </section>
        </div>
      </div>
    </main>
  );
}

/* ---------- captions ---------- */

function Caption({ lines, bold, className = "" }) {
  return (
    <p className={`flex flex-col items-center whitespace-nowrap text-[46px] leading-[53px] ${bold ? "font-bold" : ""} ${className}`}>
      {lines.map((line, i) => (
        <span key={i}>{line}</span>
      ))}
    </p>
  );
}

function LeftCaptions() {
  return (
    <aside className="flex flex-col items-start pt-[152px]">
      <Caption bold className="w-[490px]" lines={["Full time view of", "ECG data"]} />
      <Caption className="mt-[43px] w-[490px]" lines={[<><i>Zoom in</i> (red) window</>, "for R-peaks editing"]} />
      <Caption className="mt-[60px] w-[566px]" lines={[<>Scroll left/right the <i>zoom in</i></>, "R-peaks editing window"]} />
      <Caption bold className="mt-[60px] w-[566px]" lines={["Automatic and manual R-", "peaks editing window"]} />
      <Caption className="mt-8 w-[546px]" lines={["Invert ECG if necessary"]} />
      <Caption className="mt-[22px] w-[576px]" lines={[<><i>Zoom out</i> (double the range</>, "of the time and IBI axis", "limit at every click)"]} />
      <Caption className="mt-7 w-[606px]" lines={["Automatically find R peaks"]} />
      <Caption
        bold
        className="mt-[38px] w-[606px]"
        lines={[
          "Signal viewing for creating",
          "and editing “Signal” and",
          "“Sample” data segments.",
          "“Signal” magenta shaded",
          "regions define noisy data",
          "segment.",
          "“Sample” green shaded",
          "regions define analysis data",
          "samples segments.",
        ]}
      />
      <Caption className="mt-[46px] w-[536px]" lines={[<>Toggle between <i>Signal</i></>, <>and <i>Sample</i> editing view</>, "and editing"]} />
      <Caption className="mt-10 w-[618px]" lines={[<><i>Zoom in</i> (red) window</>, "for R-peaks editing"]} />
      <Caption className="mt-[54px] w-[756px]" lines={[<><i>Sample</i> windows (green)</>, "defining data segments to be", "analyzed"]} />
    </aside>
  );
}

function TopCaptions() {
  return (
    <div className="grid h-[250px] grid-cols-[670fr_862fr_586fr_658fr_59fr]">
      <Caption className="mt-[39px]" lines={["Toggle between RR editing/All", "signals view"]} />
      <Caption className="mt-[39px]" lines={["Compute ECG derived", "respiration (using amplitude", "modulation of R peaks)"]} />
      <Caption bold className="mt-4" lines={["HRV analysis option", "editing"]} />
      <Caption bold lines={["Analysis Sample data", "segment selection and", "characteristics"]} />
    </div>
  );
}

function BottomCaptions() {
  return (
    <div className="pt-[86px]">
      <div className="grid h-[246px] grid-cols-[1640fr_458fr_600fr_137fr]">
        <Caption className="col-start-2 mt-3" lines={["Freq spectrum for HRV,", "Respiration and EDR for", "the selected Analysis", "Sample window"]} />
        <Caption lines={["Data Measures (HRV,", "SCL level and response,", "Respiration freq.) for the", "selected Analysis Sample", "window"]} />
      </div>
      <div className="grid grid-cols-[minmax(0,262fr)_minmax(0,371fr)_minmax(0,668fr)_minmax(0,600fr)_minmax(0,934fr)]">
        <Caption className="mt-[158px]" lines={[<><i>Signal</i> window (magenta)</>, "defining noisy data segments"]} />
        <Caption
          className="col-start-3"
          lines={[
            <>Zoom in to the selected <i>Sample</i></>,
            "segment. Scroll left (<<) or right",
            <>(&gt;&gt;) or delete a given <i>Sample data</i></>,
            <><i>segments</i>. Analysis metrics on the</>,
            "right are computed on the selected",
            <><i>Sample</i> segment</>,
          ]}
        />
        <Caption className="mt-5" lines={["Display “All” or selectively", "SCL (skin conductance),", "RESP (respiration), EDR", "(ECG derived respiration),", "IBI (interbeat intervals) data"]} />
      </div>
    </div>
  );
}

/* ---------- callout lines ---------- */

const SOLID = [
  "M944 296L805 478", "M617 494V487Q617 483 621 483H1017Q1021 483 1021 497", "M1708 323L1588 533", "M457 471L792 675",
  "M547 638L797 805", "M500 903H844", "M558 1029L1032 892", "M588 1169L1192 892", "M520 1834L1209 1437", "M529 2017L807 1724",
  "M1116 1712L683 2206L1605 1733", "M738 2307L1402 1730", "M1574 2147L1577 1437", "M2208 2169L1951 1437",
  "M1005 1420V1431Q1005 1435 1009 1435H1404Q1408 1435 1408 1431V1420",
  "M1422 1422V1431Q1422 1435 1426 1435H1730Q1734 1435 1734 1431V1422",
  "M1748 1422V1431Q1748 1435 1752 1435H2148Q2152 1435 2152 1431V1422",
];

const DASHED = [
  "M2432 244L2571 508", "M3053 279L3128 508", "M468 312L696 592", "M544 795L682 868", "M580 1407L674 1472",
  "M2480 1911L2890 1816", "M3007 1903L2862 1393",
];

const BOXES = [
  [689, 588, 1575, 238], [689, 843, 1575, 489], [695, 1346, 1569, 459], [2315, 507, 513, 423],
  [2848, 511, 563, 419], [2305, 946, 1115, 449], [2316, 1415, 1102, 401],
];

function Callouts() {
  return (
    <svg viewBox="0 0 3442 2514" className="pointer-events-none absolute left-0 top-0 w-full" fill="none" stroke="#be4b48" aria-hidden="true">
      {SOLID.map((d) => (
        <path key={d} d={d} strokeWidth="7" />
      ))}
      {DASHED.map((d) => (
        <path key={d} d={d} strokeWidth="10" strokeDasharray="40 30" />
      ))}
      {BOXES.map(([x, y, w, h]) => (
        <g key={`${x}-${y}`} strokeWidth="9" strokeDasharray="36 27" stroke="#c0504d">
          <path d={`M${x + 15} ${y}H${x + w}`} />
          <path d={`M${x + w} ${y + 15}V${y + h}`} />
          <path d={`M${x} ${y + h}H${x + w}`} />
          <path d={`M${x} ${y + h}V${y}`} />
        </g>
      ))}
    </svg>
  );
}

export default function App() {
  return (
    <div className="relative overflow-hidden bg-white pb-6 font-['Liberation_Serif','Times_New_Roman',serif] text-black">
      <h1 className="h-[106px] pr-[180px] pt-[26px] text-center text-[74px] font-bold leading-[80px]">RR Editing View – Sample Editing View</h1>
      <div className="grid grid-cols-[607px_1fr]">
        <LeftCaptions />
        <div className="min-w-0">
          <TopCaptions />
          <SignalBrowser />
          <BottomCaptions />
        </div>
      </div>
      <Callouts />
    </div>
  );
}
